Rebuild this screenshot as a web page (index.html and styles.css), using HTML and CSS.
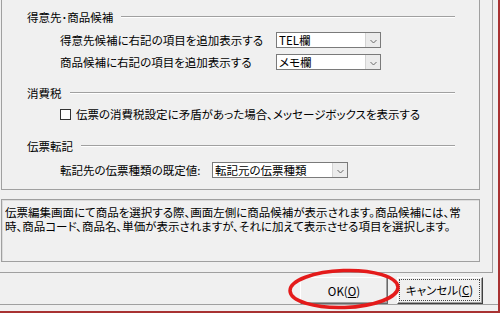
FILE: index.html
```html
<!DOCTYPE html>
<html lang="ja">
<head>
<meta charset="utf-8">
<link rel="stylesheet" href="styles.css">
</head>
<body>
<div class="window">
  <div class="inner">
    <div class="panel">
      <div class="head h1"><span class="label">得意先･商品候補</span><span class="rule"></span></div>
      <div class="row r1">
        <span class="lbl lbl1">得意先候補に右記の項目を追加表示する</span>
        <div class="combo c1"><span class="val">TEL欄</span><span class="drop"><svg width="7" height="5" viewBox="0 0 7 5"><polyline points="0.5,1 3.5,4 6.5,1" fill="none" stroke="#6b6b6b" stroke-width="1"/></svg></span></div>
      </div>
      <div class="row r2">
        <span class="lbl lbl1">商品候補に右記の項目を追加表示する</span>
        <div class="combo c1"><span class="val">メモ欄</span><span class="drop"><svg width="7" height="5" viewBox="0 0 7 5"><polyline points="0.5,1 3.5,4 6.5,1" fill="none" stroke="#6b6b6b" stroke-width="1"/></svg></span></div>
      </div>
      <div class="head h2"><span class="label">消費税</span><span class="rule"></span></div>
      <div class="chk"><span class="box"></span><span>伝票の消費税設定に矛盾があった場合、メッセージボックスを表示する</span></div>
      <div class="head h3"><span class="label">伝票転記</span><span class="rule"></span></div>
      <div class="row r3">
        <span class="lbl lbl3">転記先の伝票種類の既定値:</span>
        <div class="combo c3"><span class="val">転記元の伝票種類</span><span class="drop"><svg width="7" height="5" viewBox="0 0 7 5"><polyline points="0.5,1 3.5,4 6.5,1" fill="none" stroke="#6b6b6b" stroke-width="1"/></svg></span></div>
      </div>
    </div>
    <div class="desc"><p class="line">伝票編集画面にて商品を選択する際、画面左側に商品候補が表示されます。商品候補には、常</p><p class="line">時、商品コード、商品名、単価が表示されますが、それに加えて表示させる項目を選択します。</p></div>
  </div>
  <div class="buttons">
    <button class="btn ok">OK(<u>O</u>)</button>
    <button class="btn cancel"><span class="focus">キャンセル(<u>C</u>)</span></button>
  </div>
  <svg class="annot" width="114" height="42" viewBox="0 0 114 42"><ellipse cx="57" cy="21" rx="54" ry="18.5" fill="none" stroke="#e41b1b" stroke-width="3.5" transform="rotate(-2 57 21)"/></svg>
</div>
</body>
</html>
```
FILE: styles.css
```css
body {
  margin: 0;
  background: #f0f0f0;
  font-family: "Noto Sans CJK JP", "Noto Sans", sans-serif;
  font-size: 11.5px;
  font-feature-settings: "palt";
  color: #000;
}

.window {
  position: relative;
  width: 500px;
  height: 313px;
  box-sizing: border-box;
  border-right: 2px solid #a83232;
  border-bottom: 2px solid #a83232;
  overflow: hidden;
}

.inner {
  width: 493px;
  height: 273px;
  box-sizing: border-box;
  border-right: 1px solid #a0a0a0;
  border-bottom: 1px solid #a0a0a0;
}

.panel {
  margin-left: 1px;
  width: 479px;
  height: 190px;
  box-sizing: border-box;
  border-left: 1px solid #a0a0a0;
  border-right: 1px solid #a0a0a0;
  border-bottom: 1px solid #a0a0a0;
  padding-left: 25px;
  display: flex;
  flex-direction: column;
}

.head {
  display: flex;
  align-items: center;
  height: 14px;
  line-height: 14px;
  margin-right: 24px;
}

.rule {
  flex: 1;
  height: 0;
  border-top: 1px solid #a0a0a0;
  border-bottom: 1px solid #ffffff;
  margin-left: 8px;
}

.h1 { margin-top: 10px; }
.h2 { margin-top: 16px; }
.h3 { margin-top: 18px; }

.row {
  display: flex;
  align-items: center;
  height: 16px;
  line-height: 14px;
  padding-left: 33px;
}

.r1 { margin-top: 8px; }
.r2 { margin-top: 6px; }
.r3 { margin-top: 9px; }

.lbl1 { width: 216px; }
.lbl3 { width: 152px; }

.combo {
  box-sizing: border-box;
  height: 16px;
  border: 1px solid #7a7a7a;
  background: #fff;
  display: flex;
  align-items: center;
  justify-content: space-between;
}

.c1 { width: 105px; }
.c3 { width: 136px; }

.val {
  padding-left: 2px;
  line-height: 14px;
}

.drop {
  width: 15px;
  height: 14px;
  box-sizing: border-box;
  background: #ececec;
  border-left: 1px solid #d4d4d4;
  display: flex;
  align-items: flex-end;
  justify-content: center;
  padding-bottom: 3px;
}

.chk {
  display: flex;
  align-items: center;
  height: 14px;
  line-height: 14px;
  margin-top: 7px;
  padding-left: 33px;
}

.box {
  width: 11px;
  height: 11px;
  box-sizing: border-box;
  border: 1px solid #333;
  background: #fff;
  margin-right: 5px;
}

.desc {
  margin-top: 9px;
  margin-left: 1px;
  width: 479px;
  height: 63px;
  box-sizing: border-box;
  border: 1px solid #a0a0a0;
  box-shadow: inset 1px 1px 0 #dcdcdc;
  padding: 5px 0 0 3px;
  white-space: nowrap;
}

.line {
  margin: 0;
  height: 14px;
  line-height: 14px;
  overflow: hidden;
}

.buttons {
  height: 32px;
  box-sizing: border-box;
  border-bottom: 1px solid #a0a0a0;
  display: flex;
  justify-content: flex-end;
  align-items: flex-start;
  gap: 9px;
  padding: 4px 15px 0 0;
}

.btn {
  height: 27px;
  box-sizing: border-box;
  font: inherit;
  font-feature-settings: "palt";
  color: #000;
  background: #f0f0f0;
  border: 1px solid;
  border-color: #ffffff #696969 #696969 #ffffff;
  box-shadow: inset -1px -1px 0 #a0a0a0;
  padding: 0;
  line-height: 14px;
}

.ok { width: 88px; }

.cancel {
  width: 86px;
  border-color: #ffffff #404040 #404040 #ffffff;
  padding: 1px 2px 2px 1px;
}

.focus {
  display: flex;
  align-items: center;
  justify-content: center;
  height: 100%;
  box-sizing: border-box;
  border: 1px dotted #444;
}

.annot {
  position: absolute;
  left: 287px;
  top: 268px;
}
```
